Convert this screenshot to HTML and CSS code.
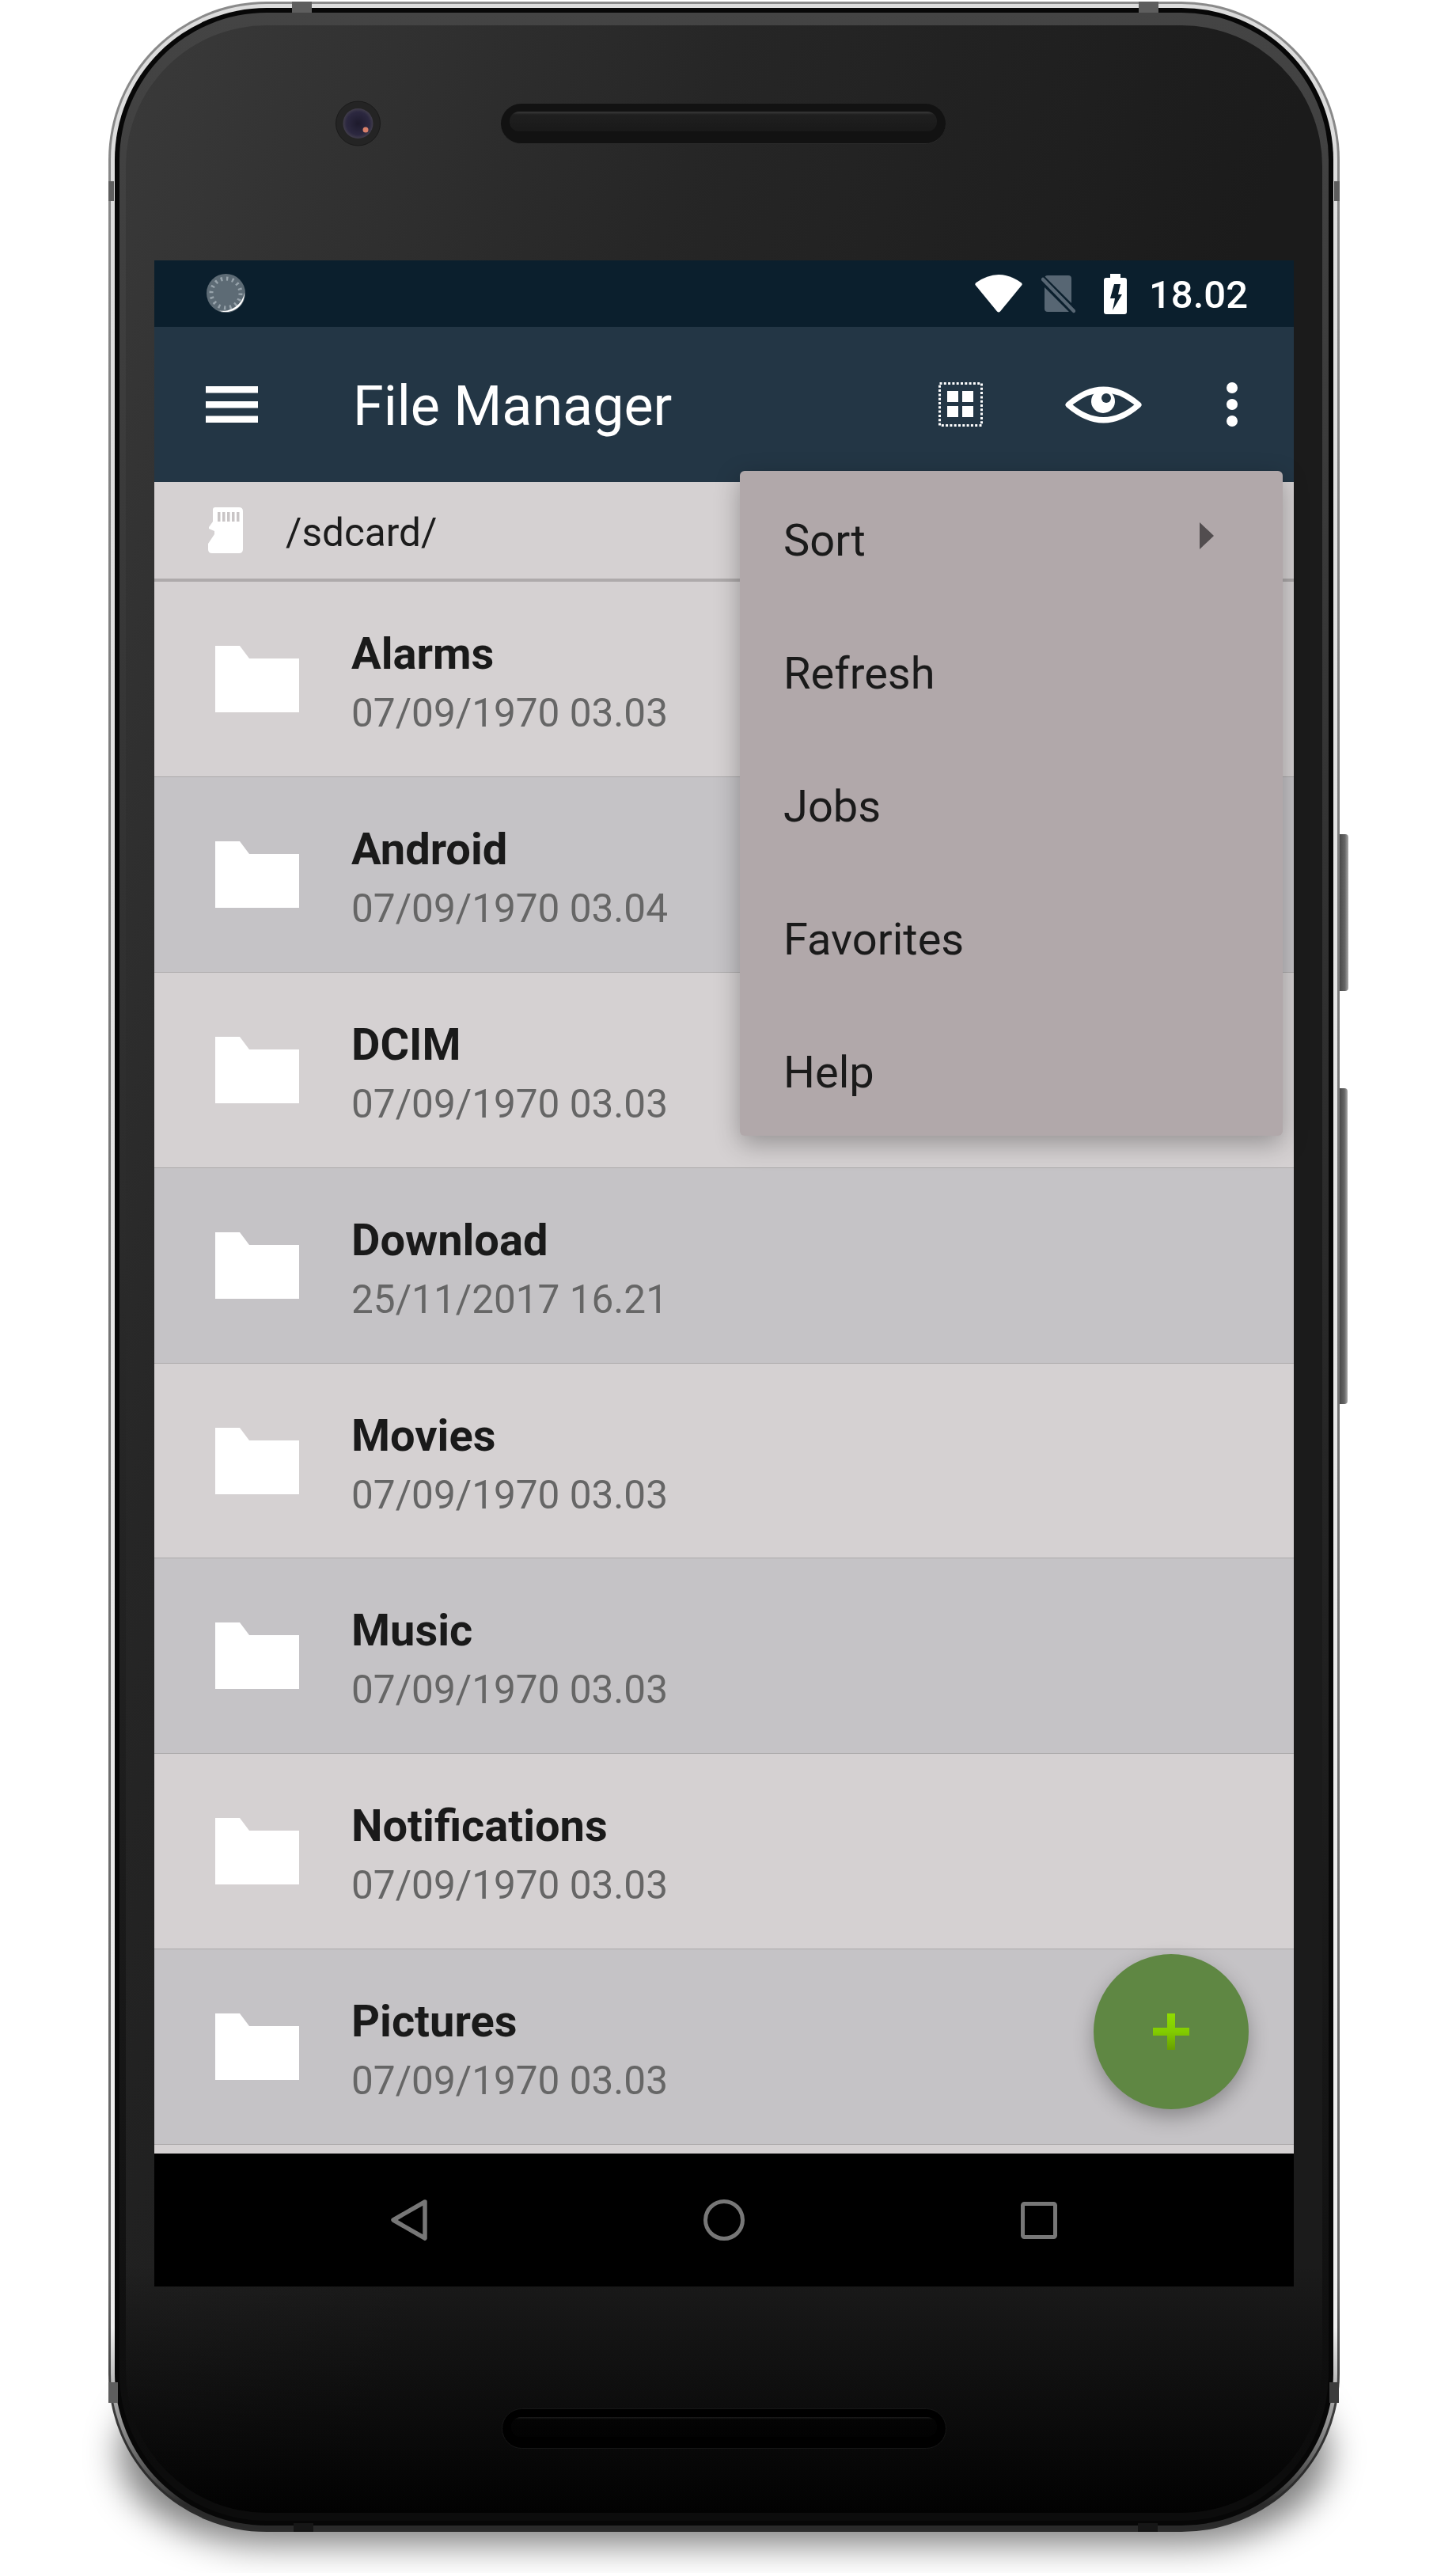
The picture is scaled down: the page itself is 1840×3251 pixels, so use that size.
FILE: index.html
```html
<!DOCTYPE html>
<html>
<head>
  <meta charset="UTF-8">
  <title>File Manager</title>
  <link rel="stylesheet" href="styles.css">
</head>
<body>
  <div class="phone">
    <div class="phone-shadow"></div>
    <span class="band band-top-left"></span>
    <span class="band band-top-right"></span>
    <span class="band band-left-top"></span>
    <span class="band band-right-top"></span>
    <span class="band band-left-bottom"></span>
    <span class="band band-right-bottom"></span>
    <span class="band band-bottom-left"></span>
    <span class="band band-bottom-right"></span>
    <span class="side-btn power"></span>
    <span class="side-btn volume"></span>

    <div class="phone-shine">
      <div class="phone-black">
        <div class="phone-rim">
          <div class="bezel">
            <div class="bezel-top">
              <svg class="camera" width="57" height="58" viewBox="0 0 57 58">
                <defs>
                  <radialGradient id="lens" cx="50%" cy="50%" r="55%">
                    <stop offset="0" stop-color="#1d1a2c"/>
                    <stop offset="0.7" stop-color="#2c2840"/>
                    <stop offset="1" stop-color="#4a4650"/>
                  </radialGradient>
                </defs>
                <circle cx="28.5" cy="29" r="28" fill="#242424" stroke="#1a1a1a"/>
                <circle cx="28.5" cy="29" r="19" fill="url(#lens)"/>
                <circle cx="38" cy="37" r="3.5" fill="#d9806a"/>
              </svg>
              <div class="speaker"><div class="speaker-bar"></div></div>
            </div>

            <div class="screen">
              <div class="status-bar">
                <svg class="sync-icon" width="50" height="50" viewBox="0 0 50 50">
                  <circle cx="24.5" cy="24.5" r="24.5" fill="#5d6b75"/>
                  <circle cx="24.5" cy="24.5" r="18.5" fill="none" stroke="#97a3ab" stroke-width="5" stroke-dasharray="2.4 4.86"/>
                  <path d="M48 24 A23.5 23.5 0 0 1 16 46.5 A28 28 0 0 0 48 24Z" fill="#fff"/>
                </svg>
                <svg class="wifi-icon" width="60" height="48" viewBox="0 0 60 48">
                  <path d="M1 10.5 Q30 -10.5 59 10.5 Q60 12 59.5 13 L32 46.5 Q30 48.5 28 46.5 L.5 13 Q0 12 1 10.5Z" fill="#fff"/>
                </svg>
                <svg class="sim-icon" width="43" height="49" viewBox="0 0 43 49">
                  <rect x="4" y="0" width="34" height="46" rx="4" fill="#576673"/>
                  <path d="M0 4 L43 47" stroke="#0b1f2d" stroke-width="10"/>
                  <path d="M2 5 L41 45" stroke="#576673" stroke-width="4.5" stroke-linecap="round"/>
                </svg>
                <svg class="battery-icon" width="29" height="51" viewBox="0 0 29 51">
                  <path d="M8 0 H21 V5 H26 Q29 5 29 8 V48 Q29 51 26 51 H3 Q0 51 0 48 V8 Q0 5 3 5 H8Z" fill="#fff"/>
                  <path d="M13 13 L21 13 L18 26 L23 26 L11 46 L14 31 L8 31Z" fill="#0b1f2d"/>
                </svg>
                <span class="clock">18.02</span>
              </div>

              <div class="toolbar">
                <svg class="menu-icon" width="66" height="46" viewBox="0 0 66 46">
                  <rect width="66" height="8.5" fill="#fff"/>
                  <rect y="19" width="66" height="8.5" fill="#fff"/>
                  <rect y="37.5" width="66" height="8.5" fill="#fff"/>
                </svg>
                <span class="toolbar-title">File Manager</span>
                <svg class="grid-icon" width="56" height="56" viewBox="0 0 56 56">
                  <rect x="1.5" y="1.5" width="53" height="53" fill="none" stroke="#fff" stroke-width="3" stroke-dasharray="3 2.3"/>
                  <rect x="11" y="11" width="14" height="14" fill="#fff"/>
                  <rect x="30" y="11" width="14" height="14" fill="#fff"/>
                  <rect x="11" y="30" width="14" height="14" fill="#fff"/>
                  <rect x="30" y="30" width="14" height="14" fill="#fff"/>
                </svg>
                <svg class="eye-icon" width="97" height="47" viewBox="0 0 97 47">
                  <path d="M4 23.5 Q48.5 -15 93 23.5 Q48.5 62 4 23.5Z" fill="none" stroke="#fff" stroke-width="7" stroke-linejoin="round"/>
                  <circle cx="48" cy="19" r="15" fill="#fff"/>
                  <circle cx="52" cy="15" r="6" fill="#233645"/>
                </svg>
                <svg class="dots-icon" width="14" height="56" viewBox="0 0 14 56">
                  <circle cx="7" cy="7" r="7" fill="#fff"/>
                  <circle cx="7" cy="28" r="7" fill="#fff"/>
                  <circle cx="7" cy="49" r="7" fill="#fff"/>
                </svg>
              </div>

              <div class="path-bar">
                <svg class="sd-icon" width="44" height="58" viewBox="0 0 44 58">
                  <path d="M9 0 H39 Q44 0 44 5 V53 Q44 58 39 58 H5 Q0 58 0 53 V46 L8 34 V30 L1 27 V25 L6 18 V3 Q6 0 9 0Z" fill="#fff"/>
                  <path d="M12 6 h3.5 v12 h-3.5z M18 6 h3.5 v12 h-3.5z M24 6 h3.5 v12 h-3.5z M30 6 h3.5 v12 h-3.5z M36 6 h3.5 v12 h-3.5z" fill="#c9c5c6"/>
                </svg>
                <span class="path-text">/sdcard/</span>
              </div>

              <ul class="file-list">
                <li class="file-row">
                  <svg class="folder-icon" width="106" height="84" viewBox="0 0 106 84"><path d="M0 0 H31 L43 16 H106 V84 H0Z" fill="#fff"/></svg>
                  <div class="file-text"><div class="file-name">Alarms</div><div class="file-date">07/09/1970 03.03</div></div>
                </li>
                <li class="file-row">
                  <svg class="folder-icon" width="106" height="84" viewBox="0 0 106 84"><path d="M0 0 H31 L43 16 H106 V84 H0Z" fill="#fff"/></svg>
                  <div class="file-text"><div class="file-name">Android</div><div class="file-date">07/09/1970 03.04</div></div>
                </li>
                <li class="file-row">
                  <svg class="folder-icon" width="106" height="84" viewBox="0 0 106 84"><path d="M0 0 H31 L43 16 H106 V84 H0Z" fill="#fff"/></svg>
                  <div class="file-text"><div class="file-name">DCIM</div><div class="file-date">07/09/1970 03.03</div></div>
                </li>
                <li class="file-row">
                  <svg class="folder-icon" width="106" height="84" viewBox="0 0 106 84"><path d="M0 0 H31 L43 16 H106 V84 H0Z" fill="#fff"/></svg>
                  <div class="file-text"><div class="file-name">Download</div><div class="file-date">25/11/2017 16.21</div></div>
                </li>
                <li class="file-row">
                  <svg class="folder-icon" width="106" height="84" viewBox="0 0 106 84"><path d="M0 0 H31 L43 16 H106 V84 H0Z" fill="#fff"/></svg>
                  <div class="file-text"><div class="file-name">Movies</div><div class="file-date">07/09/1970 03.03</div></div>
                </li>
                <li class="file-row">
                  <svg class="folder-icon" width="106" height="84" viewBox="0 0 106 84"><path d="M0 0 H31 L43 16 H106 V84 H0Z" fill="#fff"/></svg>
                  <div class="file-text"><div class="file-name">Music</div><div class="file-date">07/09/1970 03.03</div></div>
                </li>
                <li class="file-row">
                  <svg class="folder-icon" width="106" height="84" viewBox="0 0 106 84"><path d="M0 0 H31 L43 16 H106 V84 H0Z" fill="#fff"/></svg>
                  <div class="file-text"><div class="file-name">Notifications</div><div class="file-date">07/09/1970 03.03</div></div>
                </li>
                <li class="file-row">
                  <svg class="folder-icon" width="106" height="84" viewBox="0 0 106 84"><path d="M0 0 H31 L43 16 H106 V84 H0Z" fill="#fff"/></svg>
                  <div class="file-text"><div class="file-name">Pictures</div><div class="file-date">07/09/1970 03.03</div></div>
                </li>
              </ul>

              <div class="nav-bar">
                <svg width="46" height="52" viewBox="0 0 46 52"><path d="M43 3 L3 26 L43 49Z" fill="none" stroke="#777" stroke-width="5.5" stroke-linejoin="round"/></svg>
                <svg width="52" height="52" viewBox="0 0 52 52"><circle cx="26" cy="26" r="23.5" fill="none" stroke="#777" stroke-width="5"/></svg>
                <svg width="46" height="47" viewBox="0 0 46 47"><rect x="2.5" y="2.5" width="41" height="42" rx="2" fill="none" stroke="#777" stroke-width="5"/></svg>
              </div>

              <div class="popup-menu">
                <div class="popup-item">Sort<span class="popup-arrow"></span></div>
                <div class="popup-item">Refresh</div>
                <div class="popup-item">Jobs</div>
                <div class="popup-item">Favorites</div>
                <div class="popup-item">Help</div>
              </div>

              <div class="fab">
                <svg width="46" height="46" viewBox="0 0 46 46">
                  <defs>
                    <linearGradient id="plus" x1="0" y1="0" x2="0" y2="46" gradientUnits="userSpaceOnUse">
                      <stop offset="0" stop-color="#8fdc00"/>
                      <stop offset="0.5" stop-color="#82cc00"/>
                      <stop offset="1" stop-color="#689f00"/>
                    </linearGradient>
                  </defs>
                  <path d="M18 0 H28 V18 H46 V28 H28 V46 H18 V28 H0 V18 H18Z" fill="url(#plus)"/>
                </svg>
              </div>
            </div>

            <div class="bezel-bottom">
              <div class="speaker speaker-dark"><div class="speaker-bar"></div></div>
            </div>
          </div>
        </div>
      </div>
    </div>
  </div>
</body>
</html>
```

FILE: styles.css
```css
html, body {
  margin: 0;
  padding: 0;
}

body {
  width: 1840px;
  height: 3251px;
  padding: 2px 0 0 137px;
  box-sizing: border-box;
  background-color: #fff;
  font-family: Roboto, 'Liberation Sans', sans-serif;
  overflow: hidden;
}

/* phone body, one nested ring per chrome line */
.phone {
  position: relative;
  width: 1556px;
  padding: 3px;
  box-sizing: border-box;
  border-radius: 200px;
  background: linear-gradient(#8a8a8a, #666 90%, #2c2c2c 97%);
}

.phone-shadow {
  position: absolute;
  left: 14px;
  right: 14px;
  bottom: -16px;
  height: 230px;
  z-index: -1;
  border-radius: 190px / 115px;
  background-color: rgba(0, 0, 0, 0.5);
  filter: blur(22px);
}

.phone-shine {
  padding: 5px;
  border-radius: 197px;
  background: linear-gradient(#dcdcdc, #f0f0f0 92%, #8c8c8c 96%, #2a2a2a 99%);
}

.phone-black {
  padding: 6px;
  border-radius: 192px;
  background-color: #070707;
}

.phone-rim {
  padding: 16px 8px 10px;
  border-radius: 186px;
  background: linear-gradient(#444, #2a2a2a 50%, #0c0c0c 98%);
}

.bezel {
  padding: 0 36px;
  border-radius: 178px;
  background:
    linear-gradient(180deg, rgba(0, 0, 0, 0) 90%, #020202 100%),
    linear-gradient(112deg, #3a3a3a 0, #262626 28%, #1b1b1b 55%);
}

.bezel-top {
  height: 297px;
  padding: 0 0 49px 229px;
  box-sizing: border-box;
  display: flex;
  align-items: center;
}

.bezel-bottom {
  height: 286px;
  padding: 154px 0 0 439px;
  box-sizing: border-box;
}

.camera {
  margin-right: 152px;
}

.speaker {
  width: 562px;
  height: 51px;
  padding: 10px 11px 15px;
  box-sizing: border-box;
  border-radius: 26px;
  background-color: #121212;
  border-bottom: 1px solid #2c2c2c;
}

.speaker-bar {
  height: 25px;
  border-radius: 12px;
  background: linear-gradient(#3a3a3a 0, #1f1f1f 4px, #191919);
}

.speaker-dark {
  background-color: #000;
  border: 1px solid #161616;
}

.speaker-dark .speaker-bar {
  background: linear-gradient(#1a1a1a 0, #040404 3px, #020202);
}

/* metal antenna bands and side buttons */
.band {
  position: absolute;
  z-index: 2;
  background-color: #5e5e5e;
}

.band-top-left { left: 232px; top: 0; width: 25px; height: 14px; }
.band-top-right { left: 1302px; top: 0; width: 25px; height: 14px; }
.band-left-top { left: 0; top: 227px; width: 7px; height: 25px; }
.band-right-top { right: 0; top: 227px; width: 7px; height: 25px; }
.band-left-bottom { left: 0; top: 3008px; width: 12px; height: 26px; }
.band-right-bottom { right: 1px; top: 3008px; width: 12px; height: 26px; background-color: #3c3c3c; }
.band-bottom-left { left: 234px; bottom: 0; width: 25px; height: 11px; background-color: #161616; }
.band-bottom-right { left: 1301px; bottom: 0; width: 25px; height: 11px; background-color: #161616; }

.side-btn {
  position: absolute;
  left: 100%;
  background: linear-gradient(90deg, #4a4a4a, #666 60%, #aaa);
  border-radius: 0 4px 4px 0;
}

.power {
  top: 1052px;
  width: 11px;
  height: 198px;
}

.volume {
  top: 1373px;
  width: 10px;
  height: 399px;
}

/* android screen */
.screen {
  position: relative;
  width: 1440px;
  height: 2560px;
  display: flex;
  flex-direction: column;
  background-color: #d5d1d2;
}

.status-bar {
  height: 84px;
  flex: none;
  padding: 0 58px 0 66px;
  box-sizing: border-box;
  display: flex;
  align-items: center;
  background-color: #0b1f2d;
}

.sync-icon {
  margin-right: auto;
}

.wifi-icon {
  margin-right: 24px;
}

.sim-icon {
  margin: 3px 36px 0 0;
}

.battery-icon {
  margin-right: 28px;
}

.clock {
  padding-top: 3px;
  font-size: 49px;
  font-weight: 500;
  line-height: 60px;
  color: #fff;
}

.toolbar {
  height: 196px;
  flex: none;
  padding: 0 71px 0 65px;
  box-sizing: border-box;
  display: flex;
  align-items: center;
  background-color: #233645;
}

.menu-icon {
  margin-right: 120px;
}

.toolbar-title {
  margin-right: auto;
  padding-top: 4px;
  font-size: 70px;
  color: #fff;
}

.grid-icon {
  margin-right: 104px;
}

.eye-icon {
  margin-right: 107px;
}

.path-bar {
  height: 126px;
  flex: none;
  padding-left: 68px;
  box-sizing: border-box;
  display: flex;
  align-items: center;
  border-bottom: 4px solid #aeaaab;
}

.path-text {
  margin-left: 54px;
  padding-top: 6px;
  font-size: 49.5px;
  color: #1c1c1c;
}

.file-list {
  flex: 1;
  min-height: 0;
  margin: 0;
  padding: 0;
  list-style-type: none;
  overflow: hidden;
}

.file-row {
  height: 246.9px;
  padding-left: 77px;
  box-sizing: border-box;
  display: flex;
  align-items: center;
  border-bottom: 1px solid #acaaab;
}

.file-row:nth-child(even) {
  background-color: #c5c3c6;
}

.folder-icon {
  margin-right: 66px;
}

.file-text {
  padding-top: 13px;
}

.file-name {
  font-size: 56px;
  font-weight: 700;
  line-height: 73px;
  color: #1a1a1a;
}

.file-date {
  font-size: 49.5px;
  line-height: 76px;
  color: #666;
}

.nav-bar {
  height: 168px;
  flex: none;
  display: grid;
  grid-template-columns: repeat(3, 398px);
  justify-content: center;
  justify-items: center;
  align-items: center;
  background-color: #000;
}

/* overlays */
.popup-menu {
  position: absolute;
  top: 266px;
  right: 14px;
  width: 686px;
  border-radius: 6px;
  background-color: #b1a8aa;
  box-shadow: 0 10px 32px rgba(0, 0, 0, 0.3);
}

.popup-item {
  height: 168px;
  padding: 7px 87px 0 55px;
  box-sizing: border-box;
  display: flex;
  align-items: center;
  justify-content: space-between;
  font-size: 56px;
  color: #1a1a1a;
}

.popup-arrow {
  width: 0;
  height: 0;
  margin-bottom: 11px;
  border-left: 18px solid #524d4f;
  border-top: 17px solid transparent;
  border-bottom: 17px solid transparent;
}

.fab {
  position: absolute;
  right: 57px;
  bottom: 224px;
  width: 196px;
  height: 196px;
  display: flex;
  align-items: center;
  justify-content: center;
  border-radius: 50%;
  background-color: #5f8743;
  box-shadow: 0 10px 26px rgba(0, 0, 0, 0.3);
}
```
